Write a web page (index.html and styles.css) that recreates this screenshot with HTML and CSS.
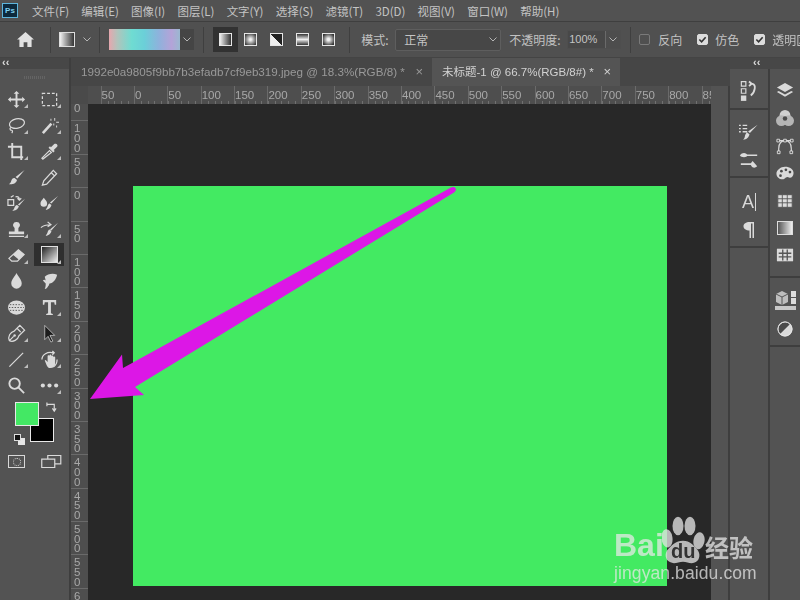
FILE: index.html
```html
<!DOCTYPE html>
<html lang="zh">
<head>
<meta charset="utf-8">
<title>Photoshop</title>
<link rel="stylesheet" href="styles.css">
</head>
<body>
<div class="app">
  <header class="menubar">
    <div class="pslogo">Ps</div>
    <nav class="menus">
      <span>文件(F)</span><span>编辑(E)</span><span>图像(I)</span><span>图层(L)</span><span>文字(Y)</span><span>选择(S)</span><span>滤镜(T)</span><span>3D(D)</span><span>视图(V)</span><span>窗口(W)</span><span>帮助(H)</span>
    </nav>
  </header>
  <div class="options">
    <svg class="home" viewBox="0 0 18 16"><path d="M9 0 18 8h-2.500v8H11v-5H7v5H2.500V8H0z"/></svg>
    <i class="divider d1"></i>
    <div class="preset"></div>
    <svg class="chev c1" viewBox="0 0 8 5"><path d="M.5.5 4 4 7.500.5"/></svg>
    <i class="divider d2"></i>
    <div class="gradbox"><div class="gradswatch"></div><div class="graddrop"><svg class="chev" viewBox="0 0 8 5"><path d="M.5.5 4 4 7.500.5"/></svg></div></div>
    <i class="divider d3"></i>
    <div class="gtypes">
      <div class="gtype on"><i class="g g1"></i></div>
      <div class="gtype"><i class="g g2"></i></div>
      <div class="gtype"><i class="g g3"></i></div>
      <div class="gtype"><i class="g g4"></i></div>
      <div class="gtype"><i class="g g5"></i></div>
    </div>
    <i class="divider d4"></i>
    <span class="lbl mode">模式:</span>
    <div class="select"><span>正常</span><svg class="chev" viewBox="0 0 8 5"><path d="M.5.5 4 4 7.500.5"/></svg></div>
    <span class="lbl opac">不透明度:</span>
    <div class="numbox"><span>100%</span><div class="numdrop"><svg class="chev" viewBox="0 0 8 5"><path d="M.5.5 4 4 7.500.5"/></svg></div></div>
    <i class="divider d5"></i>
    <i class="check"></i><span class="lbl cl1">反向</span>
    <i class="check on"><svg viewBox="0 0 10 10"><path d="M1.500 5 4 7.500 8.500 2.500"/></svg></i><span class="lbl cl2">仿色</span>
    <i class="check on"><svg viewBox="0 0 10 10"><path d="M1.500 5 4 7.500 8.500 2.500"/></svg></i><span class="lbl cl3">透明区域</span>
  </div>
  <div class="main">
    <aside class="toolbar">
      <div class="collapse">‹‹</div>
      <div class="grip"></div>
      <div class="tools">
        <div class="tool c"><svg viewBox="0 0 20 20"><path class="f" d="M10 1l3 3h-2v5h5V7l3 3-3 3v-2h-5v5h2l-3 3-3-3h2v-5H4v2l-3-3 3-3v2h5V4H7z"/></svg></div>
        <div class="tool c"><svg viewBox="0 0 20 20"><rect class="dash" x="2.500" y="3.500" width="15" height="13"/></svg></div>
        <div class="tool c"><svg viewBox="0 0 20 20"><ellipse class="s" cx="10.500" cy="8" rx="8" ry="5" transform="rotate(-12 10 8)"/><path class="s" d="M4 12c-2 2 0 3 1 3s1 2 0 3"/></svg></div>
        <div class="tool c"><svg viewBox="0 0 20 20"><path class="f" d="M2 17l9-10 2 2-9 10z"/><path class="f" d="M11 3h1v2h-1zM15 2h1v3h-1zM17 6h3v1h-3zM14 8h1v2h-1zM17 10h1v2h-1z"/></svg></div>
        <div class="tool c"><svg viewBox="0 0 20 20"><path class="s2" d="M1 5h4.500v11H17M5.500 1v4M5.500 5H15v11M15 16v3"/></svg></div>
        <div class="tool c"><svg viewBox="0 0 20 20"><path class="s" d="M3 18l-1-1 8-8 2 2z"/><path class="f" d="M9 6l5 5 1.500-1.500-1-1 3.500-3.500c1.500-2-1-4-3-3l-3.500 3.500-1-1z"/></svg></div>
        <div class="tool"><svg viewBox="0 0 20 20"><path class="f" d="M18.500 2 11 11l-2-1.500zM8 10.500l2.500 2c-.5 3-4 5-8.500 4.500 2-1 2-2 2.500-3.500.5-2 2-3.500 3.500-3z"/></svg></div>
        <div class="tool"><svg viewBox="0 0 20 20"><path class="s" d="M14 2.500l3.500 3.500L7 17l-4.500 1L4 13.500zM12 5l3.500 3.500"/></svg></div>
        <div class="tool"><svg viewBox="0 0 20 20"><path class="s" d="M1 6h6v6H1zM4 3.500l3-2M9 3c3-1 4 1 4 3M11 4.500 13 6.500 15 4.500"/><path class="f" d="M19 5l-6 7-1.500-1zM10.500 11.500l2 1.500c-.5 2.500-3 5-7 4.500 1.500-.5 2-2 2.500-3.500.5-1.500 1.500-2.500 2.500-2.500z"/></svg></div>
        <div class="tool"><svg viewBox="0 0 20 20"><path class="f" d="M4 4c2 2.500 3.500 4 3.500 6a3.500 3.500 0 0 1-7 0c0-2 1.500-3.500 3.500-6zM19 2l-7 8-1.500-1zM10 10l2 1.500c-.5 2.500-2.500 5-6 5 1-1 1.500-2 2-3.500.5-1.500 1-3 2-3z"/></svg></div>
        <div class="tool c"><svg viewBox="0 0 20 20"><path class="f" d="M10 2a3.500 3.500 0 0 1 2 6.500V12h6v3H2v-3h6V8.500A3.500 3.500 0 0 1 10 2zM2 16.500h16V18H2z"/></svg></div>
        <div class="tool c"><svg viewBox="0 0 20 20"><path class="s" d="M1 8c3-3 8-3 10-3M8 2 11.500 5 8 7"/><path class="f" d="M19 3l-7 8-1.500-1zM10 10l2 1.500c-.5 2.500-2.500 5-6 5 1-1 1.500-2 2-3.500.5-1.500 1-3 2-3z"/></svg></div>
        <div class="tool c"><svg viewBox="0 0 20 20"><path class="s" d="M2 13 12 4l6 5-7 7H5zM7 9l6 5"/><path class="f" d="M12 4l6 5-5 5-6-5z"/></svg></div>
        <div class="tool c active"><i class="gradtool"></i></div>
        <div class="tool"><svg viewBox="0 0 20 20"><path class="f" d="M10 1c2 4 5.500 7 5.500 11a5.500 5.500 0 0 1-11 0C4.500 8 8 5 10 1z"/></svg></div>
        <div class="tool"><svg viewBox="0 0 20 20"><path class="f" d="M5 5c3-3 9-4 13-2-1 5-4 9-8 9-1 3-3 6-5 6 1-2 1-4 1-6L3 9c1-1 2-1 3 0l-1-4z"/></svg></div>
        <div class="tool"><svg viewBox="0 0 20 20"><ellipse class="f" cx="10" cy="10" rx="9" ry="7.500"/><path class="spec" d="M3 7h14M2 10h16M3 13h14"/></svg></div>
        <div class="tool c"><svg viewBox="0 0 20 20"><path class="f" d="M3 2h14v5h-1.500l-.5-2.500h-3.500V16l2 .8V18H6.500v-1.200l2-.8V4.500H5L4.500 7H3z"/></svg></div>
        <div class="tool c"><svg viewBox="0 0 20 20"><path class="s" d="M2.500 17.500c-2-4 1-9 5-10l6-6 5 5-6 6c-1 4-6 7-10 5zM11 5l3.500 3.500M2.500 17.500 7 13"/><circle class="f" cx="8" cy="12" r="1.300"/></svg></div>
        <div class="tool c"><svg viewBox="0 0 20 20"><path class="black" d="M5 1.500v15l3.500-3.500 3 6 2-1-3-6h5z"/></svg></div>
        <div class="tool c"><svg viewBox="0 0 20 20"><path class="s" d="M2.500 17.500 17 3"/></svg></div>
        <div class="tool c"><svg viewBox="0 0 20 20"><path class="s" d="M2 10c0-5 6-9 12-7M13 1l2 2-2 2M18 10c0 3-1 6-4 8"/><path class="f" d="M5 11l1-.5 2 2V6.500c0-1.300 2-1.300 2 0v-1c0-1 2-1 2 0v1c0-1 2-1 2 0v1c0-1 2-1 2 0V14c0 3-2 5-5 5-2 0-3-1-4-3z"/></svg></div>
        <div class="tool"><svg viewBox="0 0 20 20"><circle class="s2" cx="8" cy="8" r="5.500"/><path class="s2" d="M12 12l6 6"/></svg></div>
        <div class="tool c"><svg viewBox="0 0 20 20"><circle class="f" cx="3" cy="10" r="2.200"/><circle class="f" cx="10" cy="10" r="2.200"/><circle class="f" cx="17" cy="10" r="2.200"/></svg></div>
      </div>
      <div class="colors">
        <i class="bgc"></i><i class="fgc"></i>
        <svg class="swap" viewBox="0 0 12 12"><path class="s" d="M1 2.500h8v6M1 .5v4M7 7l2 3 2-3"/></svg>
        <i class="minib"></i><i class="minif"></i>
      </div>
      <div class="modes">
        <div class="qmask"><i></i></div>
        <svg class="screen" viewBox="0 0 22 14"><path class="s" d="M7 4V.5h14v9H15M.5 4.500h14v9H.5z"/></svg>
      </div>
    </aside>
    <section class="doc">
      <div class="tabs">
        <div class="tab"><span>1992e0a9805f9bb7b3efadb7cf9eb319.jpeg @ 18.3%(RGB/8) *</span><b>×</b></div>
        <div class="tab cur"><span>未标题-1 @ 66.7%(RGB/8#) *</span><b>×</b></div>
      </div>
      <div class="viewrow">
        <div class="view">
          <div class="hruler">
            <div class="corner"></div>
            <div class="hticks"><span>50</span><span>0</span><span>50</span><span>100</span><span>150</span><span>200</span><span>250</span><span>300</span><span>350</span><span>400</span><span>450</span><span>500</span><span>550</span><span>600</span><span>650</span><span>700</span><span>750</span><span>800</span><span>850</span></div>
          </div>
          <div class="lower">
            <div class="vruler">
              <span>0</span><span>1<br>0<br>0</span><span>5<br>0</span><span>0</span><span>5<br>0</span><span>1<br>0<br>0</span><span>1<br>5<br>0</span><span>2<br>0<br>0</span><span>2<br>5<br>0</span><span>3<br>0<br>0</span><span>3<br>5<br>0</span><span>4<br>0<br>0</span><span>4<br>5<br>0</span><span>5<br>0<br>0</span><span>5<br>5<br>0</span><span>6<br>0<br>0</span>
            </div>
            <div class="paste"><div class="canvas"></div></div>
          </div>
        </div>
        <div class="scroll"></div>
      </div>
    </section>
    <aside class="dock">
      <div class="dockhead">‹‹</div>
      <div class="dockcols">
        <div class="col col1">
          <div class="grp g-a"><svg viewBox="0 0 20 24"><path class="s" d="M1.500 1.500h5v5h-5zM1.500 9.500h5v5h-5z"/><path class="f" d="M1 17h6v6H1z"/><path class="s2" d="M11 4h3c4 1 3 9-2 13M10 1.500 13 4l-3 2.500"/></svg></div>
          <div class="grp g-b">
            <svg viewBox="0 0 24 22"><path class="f" d="M1 3h2v1.500H1zM5 3h5v1.500H5zM1 6.500h2V8H1zM5 6.500h5V8H5zM1 10h2v1.500H1zM5 10h5v1.500H5zM21.500 3 13 12l-2-1.500zM10 11.500l2.500 2c-.5 3-3 6-7 6 1.500-1 2-3 2-4 .5-2 1.500-4 2.500-4z"/></svg>
            <svg viewBox="0 0 24 22"><path class="f" d="M2 6c2-3 5-3 7-2l1 1h11v1.500H10l-1 1c-3 1-6 0-7-1.500zM3 14.500h11L16 12l5 6c-3 3-6 1-7-1.500H3z"/></svg>
          </div>
          <div class="grp g-c">
            <div class="charA">A<i></i></div>
            <svg viewBox="0 0 14 18"><path class="f" d="M12 1v16h-1.500V2.500H9V17H7.500v-7.500C4 9.500 1.500 8 1.500 5.300S4 1 7.500 1z"/></svg>
          </div>
          <div class="grp g-d"></div>
        </div>
        <div class="col col2">
          <div class="grp g-e">
            <svg viewBox="0 0 20 20"><path class="f" d="M10 1l9 5-9 5-9-5z"/><path class="f" d="M3 10l7 4 7-4 2 1.200-9 5.300-9-5.300z"/></svg>
            <svg viewBox="0 0 20 20"><circle class="w" cx="10" cy="7" r="6"/><circle class="w2" cx="6" cy="13" r="6"/><circle class="w2" cx="14" cy="13" r="6"/><circle class="dk" cx="10" cy="10.500" r="2.500"/></svg>
            <svg viewBox="0 0 20 20"><path class="s" d="M3 17V13C3 6 7 4 10 4s7 2 7 9v4M3 4h14"/><path class="fb" d="M1 2.500h3v3H1zM16 2.500h3v3h-3zM8.500 2.500h3v3h-3zM1.500 15.500h3v3h-3zM15.500 15.500h3v3h-3z"/></svg>
            <svg viewBox="0 0 20 20"><path class="f" d="M10 3c5.500 0 9.500 3 9.500 7s-3 6-5 5c-1.500-.7-2-1-3.500 0s-2 2-3.500 2C3 17 .5 14 .5 10.500S5 3 10 3z"/><circle class="dk" cx="6" cy="8" r="1.500"/><circle class="dk" cx="11" cy="6.500" r="1.500"/><circle class="dk" cx="15.500" cy="9" r="1.500"/><circle class="dk" cx="5" cy="13" r="1.500"/></svg>
            <svg viewBox="0 0 20 20"><path class="tb" d="M2 3h16v14H2zM2 7.500h16M2 12h16M7 3v14M12.500 3v14"/></svg>
            <i class="panelgrad"></i>
            <svg viewBox="0 0 20 20"><path class="f" d="M1 3h18v14H1z"/><path class="tb2" d="M3 8h14M3 12h14M7.500 4v12M12.500 4v12"/></svg>
          </div>
          <div class="grp g-f">
            <div class="threed"><svg viewBox="0 0 14 14"><path class="w3" d="M7 0l6 3v8l-6 3-6-3V3z"/><path class="s3" d="M1 3l6 3 6-3M7 6v8"/></svg><div class="bars"><i></i><i></i></div><i class="wide"></i></div>
            <svg viewBox="0 0 16 16"><circle class="f" cx="8" cy="8" r="7.500"/><path class="dk" d="M2.800 13.300A7.500 7.500 0 0 1 13.300 2.700z"/><circle class="ring" cx="8" cy="8" r="7"/></svg>
          </div>
          <div class="grp g-g"></div>
        </div>
      </div>
    </aside>
  </div>
</div>
<svg class="arrow" viewBox="0 0 800 600"><path d="M451 187.500c2-1 4-.5 4.800 1.200.5 1.500-.3 2.800-1.800 3.800L135 387l9 8-54 4 32-44.500 1 13.500z"/></svg>
<div class="mark">
  <span class="bai">Bai</span>
  <svg class="paw" viewBox="0 0 44 44" preserveAspectRatio="none"><ellipse cx="5" cy="19" rx="5.500" ry="7.500" transform="rotate(-10 5 19)"/><ellipse cx="16" cy="9" rx="5.500" ry="7.500"/><ellipse cx="28" cy="9" rx="5.500" ry="7.500"/><ellipse cx="37" cy="21" rx="5.500" ry="7" transform="rotate(18 37 21)"/><path d="M21 21c7 0 11 4 15 8 3 4 1 9-4 10-4 1-7-1-11-1s-8 2-11 1c-6-1-8-6-5-10 4-4 9-8 16-8z"/></svg>
  <span class="du">du</span>
  <span class="jy">经验</span>
  <span class="url">jingyan.baidu.com</span>
</div>
</body>
</html>
```
FILE: styles.css
```css
* { box-sizing: border-box; }
html, body { margin: 0; height: 100%; overflow: hidden; background: #535353; }
body { font-family: "Noto Sans CJK SC", "Liberation Sans", sans-serif; color: #c4c4c4; position: relative; }
.app { width: 800px; height: 600px; display: flex; flex-direction: column; filter: blur(.3px); }

.menubar { height: 22px; background: #525252; display: flex; align-items: center; border-bottom: 1px solid #3f3f3f; flex: none; }
.pslogo { width: 16px; height: 15px; margin-left: 2px; background: #0d2a3d; border: 1px solid #5fb6dd; color: #7fd0f2; font: bold 8px/13px "Liberation Sans", sans-serif; text-align: center; }
.menus { display: flex; gap: 12.200px; margin-left: 14px; font-size: 11.500px; line-height: 16px; white-space: nowrap; }

.options { height: 36px; background: #505050; border-bottom: 1px solid #444; display: flex; align-items: center; flex: none; font-size: 12px; }
.home { width: 17px; height: 15px; margin-left: 17px; fill: #e2e2e2; flex: none; }
.divider { width: 1px; height: 26px; background: #3f3f3f; flex: none; }
.d1 { margin-left: 16px; }
.preset { width: 16px; height: 15px; margin-left: 8px; border: 1px solid #ddd; background: linear-gradient(90deg, #f2f2f2, #333); flex: none; }
.chev { width: 8px; height: 5px; fill: none; stroke: #b5b5b5; stroke-width: 1; flex: none; }
.c1 { margin-left: 8px; }
.d2 { margin-left: 8px; }
.gradbox { display: flex; width: 85px; height: 21px; margin-left: 9px; flex: none; }
.gradswatch { width: 71px; background: linear-gradient(90deg, #e6a7ae 0%, #b0c4bc 12%, #6fdcd2 32%, #6bcfd8 50%, #8eb2dc 70%, #b4a3d8 88%, #9ab8d0 100%); }
.graddrop { flex: 1; background: #454545; display: flex; align-items: center; justify-content: center; }
.d3 { margin-left: 9px; }
.gtypes { display: flex; margin-left: 9px; align-items: center; }
.gtype { width: 25.800px; height: 25px; display: flex; align-items: center; justify-content: center; }
.gtype.on { width: 25px; background: #323232; }
.g { width: 13px; height: 13px; border: 1px solid #e6e6e6; display: block; }
.g1 { background: linear-gradient(90deg, #eee, #333); }
.g2 { background: radial-gradient(circle, #f2f2f2 10%, #444 85%); }
.g3 { background: linear-gradient(45deg, #eee 50%, #222 50%); }
.g4 { background: linear-gradient(180deg, #333, #eee 50%, #333); }
.g5 { background: radial-gradient(circle, #f0f0f0 15%, #333 85%); }
.d4 { margin-left: 8px; }
.lbl { white-space: nowrap; flex: none; color: #c2c2c2; }
.mode { margin-left: 11px; width: 34px; }
.select { width: 106px; height: 22px; background: #474747; border: 1px solid #5e5e5e; border-radius: 2px; display: flex; align-items: center; justify-content: space-between; padding: 0 3px 0 8px; flex: none; }
.opac { margin-left: 8px; width: 58px; }
.numbox { width: 54px; height: 19px; display: flex; background: #484848; border: 1px solid #4e4e4e; flex: none; font: 11px/17px "Liberation Sans", sans-serif; }
.numbox span { flex: 1; padding-left: 1px; }
.numdrop { width: 15px; background: #4d4d4d; border-left: 1px solid #6a6a6a; display: flex; align-items: center; justify-content: center; }
.d5 { margin-left: 9px; }
.check { width: 11px; height: 11px; margin-left: 8px; border: 1px solid #7a7a7a; border-radius: 2px; flex: none; display: block; }
.check.on { background: #dcdcdc; border-color: #dcdcdc; margin-left: 17px; }
.check svg { display: block; fill: none; stroke: #333; stroke-width: 1.800; }
.cl1 { margin-left: 8px; width: 22px; }
.cl2 { margin-left: 7px; width: 22px; }
.cl3 { margin-left: 7px; }

.main { flex: 1; display: flex; min-height: 0; }

.toolbar { background: #535353; border-right: 2px solid #3e3e3e; flex: none; width: 71px; display: flex; flex-direction: column; }
.collapse { height: 11px; background: #474747; font: bold 11px/9px "Liberation Sans", sans-serif; padding-left: 2px; color: #ddd; }
.grip { height: 17px; display: flex; align-items: center; justify-content: center; }
.grip::before { content: ""; width: 22px; height: 3px; background: repeating-linear-gradient(90deg, #646464 0 1px, transparent 1px 2px); }
.tools { display: grid; grid-template-columns: 33px 33px; grid-auto-rows: 26px; }
.tool { position: relative; display: flex; align-items: center; justify-content: center; }
.tool svg { width: 19px; height: 19px; display: block; }
.tool.c::after { content: ""; position: absolute; right: 5px; bottom: 4px; border-style: solid; border-width: 0 0 4px 4px; border-color: transparent transparent #bdbdbd transparent; }
.tool.active { background: #2f2f2f; margin: 1px 2px 2px 1px; }
.tool.active::after { right: 3px; bottom: 2px; }
.gradtool { width: 17px; height: 17px; border: 1px solid #e0e0e0; background: linear-gradient(135deg, #222, #eee); display: block; }
.f { fill: #dadada; }
.s { fill: none; stroke: #dadada; stroke-width: 1.300; }
.s2 { fill: none; stroke: #dadada; stroke-width: 2; }
.dash { fill: none; stroke: #dadada; stroke-width: 1.300; stroke-dasharray: 3 2; }
.black { fill: #1c1c1c; stroke: #cfcfcf; stroke-width: .8; }
.spec { fill: none; stroke: #555; stroke-width: 1; stroke-dasharray: 1.500 1.500; }

.colors { position: relative; height: 47px; margin-top: 4px; flex: none; }
.fgc, .bgc { position: absolute; border: 1px solid #e8e8e8; display: block; }
.fgc { left: 15px; top: 0; width: 24px; height: 24px; background: #43e864; }
.bgc { left: 30px; top: 16px; width: 24px; height: 24px; background: #000; }
.swap { position: absolute; left: 46px; top: 0; width: 11px; height: 11px; }
.minib { position: absolute; left: 18px; top: 36px; width: 7px; height: 7px; background: #e6e6e6; }
.minif { position: absolute; left: 14px; top: 32px; width: 7px; height: 7px; background: #111; border: 1px solid #ddd; }
.modes { display: flex; align-items: center; padding-left: 8px; gap: 16px; margin-top: 6px; }
.qmask { width: 17px; height: 13px; border: 1px solid #d8d8d8; display: flex; align-items: center; justify-content: center; }
.qmask i { width: 8px; height: 8px; border: 1px dotted #d8d8d8; border-radius: 50%; display: block; }
.screen { width: 21px; height: 13px; display: block; }

.doc { flex: 1; display: flex; flex-direction: column; min-width: 0; }
.tabs { height: 28px; background: #464646; display: flex; font-size: 11.500px; line-height: 28px; white-space: nowrap; flex: none; }
.tab { width: 361px; padding-left: 10px; display: flex; justify-content: space-between; padding-right: 9px; color: #999; overflow: hidden; flex: none; font-family: "Liberation Sans", "Noto Sans CJK SC", sans-serif; font-size: 11.650px; }
.tab b { font-weight: normal; font-size: 13px; }
.tab.cur { width: 188px; background: #545454; color: #d2d2d2; font-size: 11.500px; }
.viewrow { flex: 1; display: flex; min-height: 0; }
.view { width: 640px; display: flex; flex-direction: column; flex: none; }
.scroll { flex: 1; background: #535353; border-right: 2px solid #3e3e3e; }
.hruler { height: 18px; display: flex; background: #4e4e4e; flex: none; }
.corner { width: 17px; background: #4a4a4a; flex: none; }
.hticks { flex: 1; display: flex; padding-left: 12.500px; overflow: hidden; font: 11.500px/18px "Liberation Sans", sans-serif; color: #a8a8a8; background: repeating-linear-gradient(90deg, #707070 0 1px, transparent 1px 6.680px) 12.500px 100% / 100% 3px no-repeat; }
.hticks span { width: 33.400px; flex: none; padding-left: 1px; box-shadow: inset 1px 0 0 #6a6a6a; }
.lower { flex: 1; display: flex; min-height: 0; }
.vruler { width: 17px; background: #4e4e4e; flex: none; overflow: hidden; font: 11.500px/9.700px "Liberation Sans", sans-serif; color: #a8a8a8; }
.vruler span { display: block; height: 33.400px; padding: 3px 0 0 3px; border-top: 1px solid #6a6a6a; }
.vruler span:first-child { height: 16.400px; padding-top: 0; border-top: 0; }
.paste { flex: 1; background: #282828; padding: 82px 0 0 45px; }
.canvas { width: 534px; height: 400px; background: #43ea62; }

.dock { width: 70px; display: flex; flex-direction: column; flex: none; }
.dockhead { height: 11px; background: #474747; font: bold 11px/9px "Liberation Sans", sans-serif; color: #ddd; padding-left: 23px; }
.dockcols { flex: 1; display: flex; min-height: 0; }
.col { display: flex; flex-direction: column; background: #535353; flex: none; }
.col1 { width: 40px; border-right: 2px solid #3e3e3e; }
.col2 { flex: 1; }
.grp { display: flex; flex-direction: column; align-items: center; border-bottom: 2px solid #3e3e3e; padding-top: 8px; flex: none; }
.grp svg { display: block; flex: none; }
.g-a { height: 41px; }
.g-a svg { width: 18px; height: 22px; margin-top: 3px; }
.g-b { height: 68px; gap: 8px; padding-top: 12px; }
.g-b svg { width: 22px; height: 20px; }
.g-c { height: 70px; gap: 10px; padding-top: 15px; }
.g-c svg { width: 14px; height: 18px; }
.charA { font: 18px/18px "Liberation Sans", sans-serif; color: #d8d8d8; display: flex; }
.charA i { width: 1px; height: 18px; background: #d8d8d8; margin-left: 1px; display: block; }
.g-d { flex: 1; border-bottom: 0; }
.g-e { height: 209px; gap: 9.400px; padding: 13px 0 0 0; }
.g-e svg { width: 18px; height: 18px; }
.panelgrad { width: 16px; height: 14px; margin: 2px 0; display: block; background: linear-gradient(90deg, #555, #eee); border: 1px solid #ddd; }
.w { fill: #d0d0d0; }
.w2 { fill: #b5b5b5; }
.dk { fill: #4a4a4a; }
.fb { fill: #535353; stroke: #e0e0e0; stroke-width: 1; }
.tb { fill: #dcdcdc; stroke: #555; stroke-width: 1; }
.tb2 { fill: none; stroke: #555; stroke-width: 1.500; }
.ring { fill: none; stroke: #e6e6e6; stroke-width: 1; }
.g-f { height: 69px; gap: 11px; padding: 13px 0 0 0; }
.g-f > svg { width: 16px; height: 16px; }
.threed { display: grid; grid-template-columns: 14px 5px; gap: 1px 2px; }
.threed svg { width: 14px; height: 14px; }
.w3 { fill: #bdbdbd; }
.s3 { fill: none; stroke: #555; stroke-width: 1; }
.bars { display: flex; flex-direction: column; gap: 1px; }
.bars i { height: 6px; background: #dcdcdc; display: block; }
.wide { grid-column: 1 / 3; height: 4px; background: #c8c8c8; display: block; }
.g-g { flex: 1; border-bottom: 0; }

.arrow { position: absolute; left: 0; top: 0; width: 800px; height: 600px; fill: #dc17e6; }

.mark { position: absolute; left: 612px; top: 515px; width: 150px; height: 70px; color: rgba(232,232,232,.74); }
.mark span { position: absolute; white-space: nowrap; }
.bai { left: 2px; top: 12px; font: bold 32px/36px "Liberation Sans", sans-serif; }
.paw { position: absolute; left: 50px; top: 0; width: 44px; height: 54px; fill: rgba(225,225,225,.78); }
.du { left: 59px; top: 24px; color: #333; font: bold 20px/24px "Liberation Sans", sans-serif; }
.jy { left: 93px; top: 17px; font: bold 24px/30px "Noto Sans CJK SC", sans-serif; }
.url { left: 2px; top: 48px; font: 17.500px/20px "Liberation Sans", sans-serif; letter-spacing: .1px; }
```
